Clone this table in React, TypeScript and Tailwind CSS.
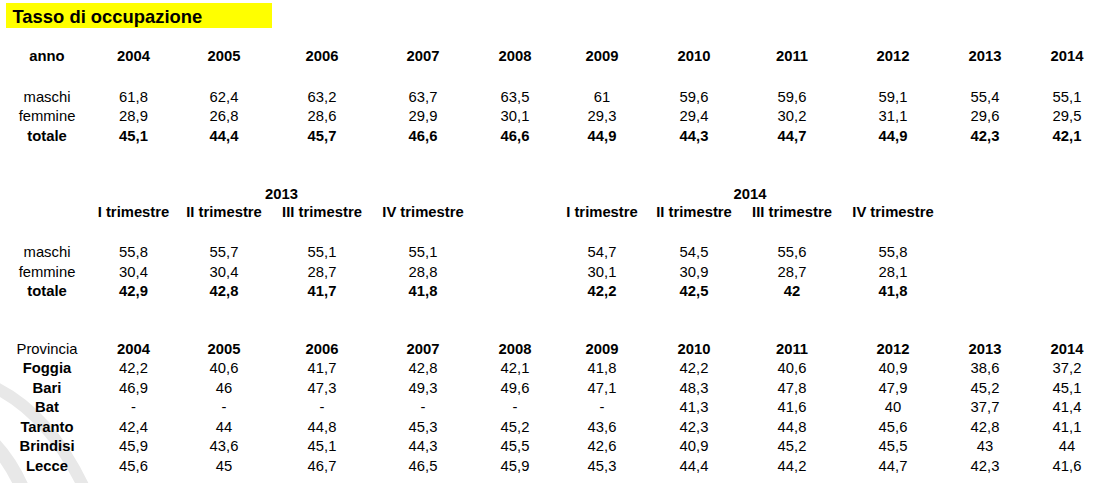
import React from "react";

const cols =
  "grid grid-cols-[86px_87px_94px_102px_100px_84px_90px_94px_102px_100px_84px_80px] ml-[4px]";

const years = ["2004", "2005", "2006", "2007", "2008", "2009", "2010", "2011", "2012", "2013", "2014"];

const annual = [
  { label: "maschi", bold: false, values: ["61,8", "62,4", "63,2", "63,7", "63,5", "61", "59,6", "59,6", "59,1", "55,4", "55,1"] },
  { label: "femmine", bold: false, values: ["28,9", "26,8", "28,6", "29,9", "30,1", "29,3", "29,4", "30,2", "31,1", "29,6", "29,5"] },
  { label: "totale", bold: true, values: ["45,1", "44,4", "45,7", "46,6", "46,6", "44,9", "44,3", "44,7", "44,9", "42,3", "42,1"] },
];

// 2013 quarters, empty column, 2014 quarters
const quarters = [
  { label: "maschi", bold: false, values: ["55,8", "55,7", "55,1", "55,1", "", "54,7", "54,5", "55,6", "55,8"] },
  { label: "femmine", bold: false, values: ["30,4", "30,4", "28,7", "28,8", "", "30,1", "30,9", "28,7", "28,1"] },
  { label: "totale", bold: true, values: ["42,9", "42,8", "41,7", "41,8", "", "42,2", "42,5", "42", "41,8"] },
];

const trimestri = ["I trimestre", "II trimestre", "III trimestre", "IV trimestre"];

const province = [
  { name: "Foggia", values: ["42,2", "40,6", "41,7", "42,8", "42,1", "41,8", "42,2", "40,6", "40,9", "38,6", "37,2"] },
  { name: "Bari", values: ["46,9", "46", "47,3", "49,3", "49,6", "47,1", "48,3", "47,8", "47,9", "45,2", "45,1"] },
  { name: "Bat", values: ["-", "-", "-", "-", "-", "-", "41,3", "41,6", "40", "37,7", "41,4"] },
  { name: "Taranto", values: ["42,4", "44", "44,8", "45,3", "45,2", "43,6", "42,3", "44,8", "45,6", "42,8", "41,1"] },
  { name: "Brindisi", values: ["45,9", "43,6", "45,1", "44,3", "45,5", "42,6", "40,9", "45,2", "45,5", "43", "44"] },
  { name: "Lecce", values: ["45,6", "45", "46,7", "46,5", "45,9", "45,3", "44,4", "44,2", "44,7", "42,3", "41,6"] },
];

function Row({ children, className = "" }: { children: React.ReactNode; className?: string }) {
  return <div className={`${cols} h-[19.5px] leading-[19.5px] text-center ${className}`}>{children}</div>;
}

export default function App() {
  return (
    <div className="relative w-[1102px] h-[483px] overflow-hidden bg-white text-black text-[14.8px] font-['Liberation_Sans',Arial,sans-serif]">
      {/* watermark rings, bottom left */}
      <svg className="absolute left-0 top-0 pointer-events-none" width="1102" height="483">
        <path d="M -6 387 Q 50 414 86 492" fill="none" stroke="#e8e8e8" strokeWidth="12" />
        <path d="M -8 442 Q 11 461 24 492" fill="none" stroke="#e8e8e8" strokeWidth="14" />
      </svg>

      <div className="relative">
        <div className="mt-[3px] ml-[6px] w-[266px] h-[25px] bg-[#ffff00] pl-[6.5px] text-[18.4px] font-bold leading-[27px]">
          Tasso di occupazione
        </div>

        {/* annual table */}
        <div className="h-[19.45px]" />
        <Row className="font-bold">
          <div>anno</div>
          {years.map((y) => (
            <div key={y}>{y}</div>
          ))}
        </Row>
        <div className="h-[20.6px]" />
        {annual.map((r) => (
          <Row key={r.label} className={r.bold ? "font-bold" : ""}>
            <div>{r.label}</div>
            {r.values.map((v, i) => (
              <div key={i}>{v}</div>
            ))}
          </Row>
        ))}

        {/* quarterly table */}
        <div className="h-[38.7px]" />
        <div className={`${cols} h-[18.5px] leading-[19.5px] text-center font-bold`}>
          <div />
          <div className="col-span-4">2013</div>
          <div />
          <div className="col-span-4">2014</div>
        </div>
        <Row className="font-bold">
          <div />
          {trimestri.map((t) => (
            <div key={"a" + t} className="whitespace-nowrap">{t}</div>
          ))}
          <div />
          {trimestri.map((t) => (
            <div key={"b" + t} className="whitespace-nowrap">{t}</div>
          ))}
        </Row>
        <div className="h-[20.75px]" />
        {quarters.map((r) => (
          <Row key={r.label} className={r.bold ? "font-bold" : ""}>
            <div>{r.label}</div>
            {r.values.map((v, i) => (
              <div key={i}>{v}</div>
            ))}
          </Row>
        ))}

        {/* provinces */}
        <div className="h-[37.75px]" />
        <Row>
          <div>Provincia</div>
          {years.map((y) => (
            <div key={y} className="font-bold">{y}</div>
          ))}
        </Row>
        {province.map((p) => (
          <Row key={p.name}>
            <div className="font-bold">{p.name}</div>
            {p.values.map((v, i) => (
              <div key={i}>{v}</div>
            ))}
          </Row>
        ))}
      </div>
    </div>
  );
}
